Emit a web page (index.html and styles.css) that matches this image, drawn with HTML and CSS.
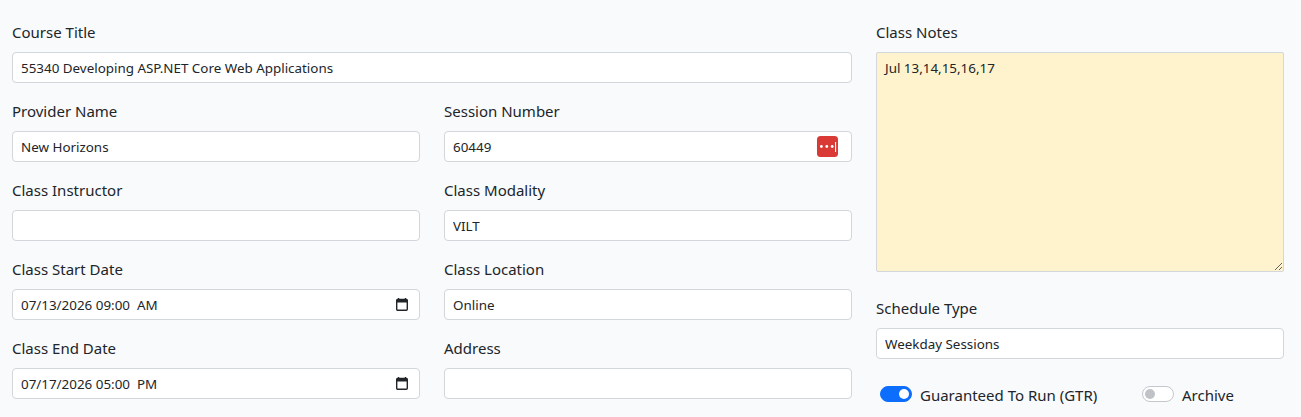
FILE: index.html
```html
<!DOCTYPE html>
<html lang="en">
<head>
<meta charset="utf-8">
<title>Class</title>
<link rel="stylesheet" href="styles.css">
</head>
<body>
<main class="page">
  <section class="left">
    <div class="field wide">
      <label class="label">Course Title</label>
      <input class="control" type="text" value="55340 Developing ASP.NET Core Web Applications">
    </div>
    <div class="field">
      <label class="label">Provider Name</label>
      <input class="control" type="text" value="New Horizons">
    </div>
    <div class="field">
      <label class="label">Session Number</label>
      <div class="input-wrap">
        <input class="control" type="text" value="60449">
        <svg class="pw-icon" width="21" height="21" viewBox="0 0 21 21" aria-hidden="true">
          <rect width="21" height="21" rx="3.5" fill="#d93a36"/>
          <circle cx="4.4" cy="10.5" r="1.4" fill="#fff"/>
          <circle cx="9.8" cy="10.5" r="1.4" fill="#fff"/>
          <circle cx="15.2" cy="10.5" r="1.4" fill="#fff"/>
          <rect x="18" y="6" width="1.1" height="10" fill="#fff"/>
        </svg>
      </div>
    </div>
    <div class="field">
      <label class="label">Class Instructor</label>
      <input class="control" type="text" value="">
    </div>
    <div class="field">
      <label class="label">Class Modality</label>
      <input class="control" type="text" value="VILT">
    </div>
    <div class="field">
      <label class="label">Class Start Date</label>
      <div class="input-wrap">
        <input class="control" type="text" value="07/13/2026 09:00  AM">
        <svg class="cal-icon" width="12" height="13" viewBox="0 0 12 13" aria-hidden="true">
          <path d="M2.5 0v1.5M9.5 0v1.5" stroke="#212529" stroke-width="1.4" fill="none"/>
          <rect x="0.7" y="1.5" width="10.6" height="10.8" rx="1" fill="none" stroke="#212529" stroke-width="1.4"/>
          <rect x="0.7" y="1.5" width="10.6" height="3" fill="#212529"/>
        </svg>
      </div>
    </div>
    <div class="field">
      <label class="label">Class Location</label>
      <input class="control" type="text" value="Online">
    </div>
    <div class="field">
      <label class="label">Class End Date</label>
      <div class="input-wrap">
        <input class="control" type="text" value="07/17/2026 05:00  PM">
        <svg class="cal-icon" width="12" height="13" viewBox="0 0 12 13" aria-hidden="true">
          <path d="M2.5 0v1.5M9.5 0v1.5" stroke="#212529" stroke-width="1.4" fill="none"/>
          <rect x="0.7" y="1.5" width="10.6" height="10.8" rx="1" fill="none" stroke="#212529" stroke-width="1.4"/>
          <rect x="0.7" y="1.5" width="10.6" height="3" fill="#212529"/>
        </svg>
      </div>
    </div>
    <div class="field">
      <label class="label">Address</label>
      <input class="control" type="text" value="">
    </div>
  </section>
  <section class="right">
    <div class="field">
      <label class="label">Class Notes</label>
      <textarea class="control notes">Jul 13,14,15,16,17</textarea>
    </div>
    <div class="field">
      <label class="label">Schedule Type</label>
      <input class="control" type="text" value="Weekday Sessions">
    </div>
    <div class="switches">
      <div class="switch-item">
        <span class="switch on"><span class="knob"></span></span>
        <span class="switch-label">Guaranteed To Run (GTR)</span>
      </div>
      <div class="switch-item">
        <span class="switch"><span class="knob"></span></span>
        <span class="switch-label">Archive</span>
      </div>
    </div>
  </section>
</main>
</body>
</html>
```

FILE: styles.css
```css
* { box-sizing: border-box; }
html, body { margin: 0; padding: 0; height: 100%; overflow: hidden; }
body {
  background: #f8fafc;
  color: #212529;
  font-family: "Noto Sans", "Open Sans", sans-serif;
}
.page {
  display: flex;
  gap: 24px;
  padding: 20px 17px 0 12px;
}
.left {
  width: 840px;
  display: grid;
  grid-template-columns: 408px 408px;
  column-gap: 24px;
  row-gap: 16px;
  align-content: start;
}
.right {
  width: 408px;
  display: flex;
  flex-direction: column;
  gap: 24px;
}
.wide { grid-column: 1 / 3; }
.field { display: flex; flex-direction: column; gap: 8px; }
.label {
  font-size: 15px;
  line-height: 24px;
  height: 24px;
}
.input-wrap { position: relative; }
.control {
  display: block;
  width: 100%;
  height: 31px;
  padding: 4px 8px;
  font-family: inherit;
  font-size: 13.4px;
  line-height: 20px;
  color: #212529;
  background: #fff;
  border: 1px solid #d3d6da;
  border-radius: 4px;
  outline: none;
}
.notes {
  height: 220px;
  padding-top: 5px;
  background: #fff3cd;
  resize: vertical;
  border-radius: 2px;
}
.pw-icon {
  position: absolute;
  top: 5px;
  right: 14px;
}
.cal-icon {
  position: absolute;
  top: 9px;
  right: 12px;
}
.switches {
  display: flex;
  align-items: center;
  padding-left: 4px;
  height: 24px;
  margin-top: -1px;
}
.switch-item { display: flex; align-items: center; gap: 8px; }
.switch-item:first-child { width: 262px; }
.switch {
  width: 32px;
  height: 16px;
  border-radius: 8px;
  border: 1px solid #c4c8cc;
  background: #fff;
  display: flex;
  align-items: center;
  padding: 0 2px;
}
.switch .knob {
  width: 10px;
  height: 10px;
  border-radius: 50%;
  background: #bfc3c7;
}
.switch.on {
  background: #0d6efd;
  border-color: #0d6efd;
  justify-content: flex-end;
}
.switch.on .knob { background: #fff; }
.switch-label { font-size: 15px; line-height: 24px; padding-top: 1px; }
```
